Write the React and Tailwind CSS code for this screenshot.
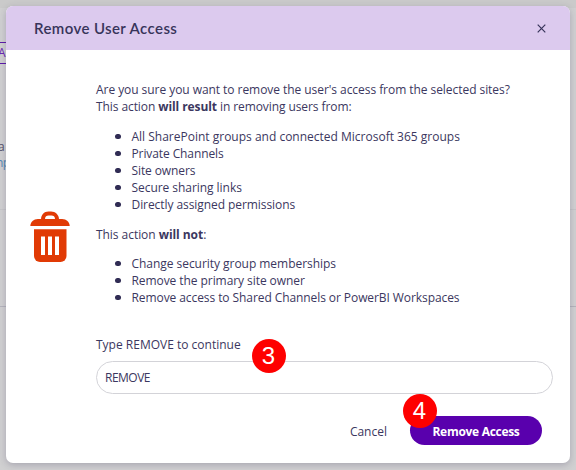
import React from "react";

function TrashIcon() {
  return (
    <svg width="40" height="52" viewBox="0 0 40 52" className="block shrink-0" fill="none">
      <path d="M11 9.500V8.500C11 4 14 .5 18.500.5h2.500C25.500.5 29 4 29 8.500v1Z" fill="#e13a05" />
      <path d="M8 8h24c4.500 0 7.500 3 7.700 7H.3C.5 11 3.500 8 8 8Z" fill="#e13a05" />
      <path d="M15 8c0-2.500 1.500-3.500 3.500-3.500h3c2 0 3.500 1 3.500 3.500Z" fill="white" />
      <path d="M4 18.300h32.500V45a6 6 0 0 1-6 6H10a6 6 0 0 1-6-6Z" fill="#e13a05" />
      <path d="M11 25.500h4V44h-4zM18 25.500h4V44h-4zM25 25.500h4V44h-4z" fill="white" />
    </svg>
  );
}

function Item({ children, className = "" }) {
  return (
    <li className="flex h-[17px] items-center">
      <span className="mr-[11px] size-[5.500px] shrink-0 rounded-full bg-[#302c54]" />
      <span className={className}>{children}</span>
    </li>
  );
}

function Step({ children, className }) {
  return (
    <span className={`absolute flex size-[34px] items-center justify-center rounded-full bg-[#fe0000] font-['Liberation_Sans',sans-serif] text-[24px] leading-none text-white ${className}`}>
      {children}
    </span>
  );
}

function PageBehind() {
  return (
    <div className="h-full w-full text-[12px]">
      <div className="h-2 bg-[#cacaca]" />
      <div className="mt-[34px] h-[22px] w-6 border-y border-[#5c1aa8] text-[12px] leading-5 text-[#6a28b4]"><span className="-ml-0.5">A</span></div>
      <div className="mt-[75px] h-4 leading-4 text-[#55526a]"><span className="-ml-0.5">a</span></div>
      <div className="h-4 leading-4 tracking-[-0.500px] text-[#5487b4]"><span className="-ml-1">np</span></div>
      <div className="mt-[38px] h-px bg-[#c6c6c8]" />
      <div className="mt-[96px] h-px bg-[#b4b4bc]" />
    </div>
  );
}

export default function App() {
  return (
    <div className="relative h-[470px] w-[576px] overflow-hidden bg-[#d0d0d1] font-['Open_Sans','Noto_Sans',sans-serif] text-[12px] leading-[17px] text-[#3b3760]">
      <PageBehind />
      <div className="absolute top-1.5 left-1.5 flex h-[457px] w-[564px] flex-col overflow-hidden rounded-[7px] bg-white shadow-[0_2px_7px_rgba(50,45,85,0.25)]">
        <header className="flex h-11 shrink-0 items-center justify-between bg-[#dccaee] pr-6 pl-[28px]">
          <h1 className="font-['Lato',sans-serif] text-[15px] font-semibold tracking-[0.4px] text-[#37345a]">Remove User Access</h1>
          <svg width="9" height="9" viewBox="0 0 9 9" stroke="#37345a" strokeWidth="1.200">
            <path d="M.7.7l7.600 7.600M8.300.7L.7 8.300" />
          </svg>
        </header>
        <div className="flex pl-6">
          <div className="w-[66px] shrink-0 pt-[161px]">
            <TrashIcon />
          </div>
          <div className="w-[457px] pt-[31px] whitespace-nowrap">
            <p className="tracking-[-0.055px]">Are you sure you want to remove the user's access from the selected sites?</p>
            <p className="tracking-[-0.085px]">This action <b>will result</b> in removing users from:</p>
            <ul className="mt-[13px] pl-[19px]">
              <Item>All SharePoint groups and connected Microsoft 365 groups</Item>
              <Item className="tracking-[-0.100px]">Private Channels</Item>
              <Item className="tracking-[-0.100px]">Site owners</Item>
              <Item className="tracking-[-0.050px]">Secure sharing links</Item>
              <Item className="tracking-[-0.070px]">Directly assigned permissions</Item>
            </ul>
            <p className="mt-[13px] tracking-[-0.050px]">This action <b>will not</b>:</p>
            <ul className="mt-[12px] pl-[19px]">
              <Item className="tracking-[-0.040px]">Change security group memberships</Item>
              <Item className="tracking-[-0.070px]">Remove the primary site owner</Item>
              <Item className="tracking-[-0.080px]">Remove access to Shared Channels or PowerBI Workspaces</Item>
            </ul>
            <p className="mt-[30px]">Type REMOVE to continue</p>
            <div className="mt-[8px] flex h-[33px] items-center rounded-full border border-[#d3d3d8] pl-[8px] tracking-[-0.500px]">REMOVE</div>
          </div>
        </div>
        <footer className="mt-[22px] flex items-center justify-end gap-[23px] pr-[28px]">
          <button className="pt-px text-[12px]">Cancel</button>
          <button className="h-[29px] w-[132px] rounded-full bg-[#5900ad] pt-px text-[12px] font-bold tracking-[-0.300px] text-white">Remove Access</button>
        </footer>
      </div>
      <Step className="top-[339px] left-[251.500px]">3</Step>
      <Step className="top-[394px] left-[402.500px]">4</Step>
    </div>
  );
}
